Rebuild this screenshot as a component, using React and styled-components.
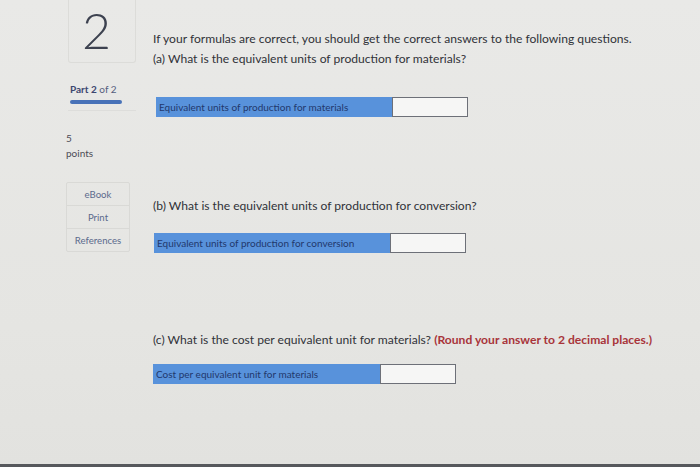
import React from "react";
import styled, { createGlobalStyle } from "styled-components";

const GlobalStyle = createGlobalStyle`
  html, body {
    margin: 0;
    padding: 0;
    background: #e6e6e3;
  }
  body {
    font-family: Lato, "Liberation Sans", Arial, sans-serif;
    color: #333;
  }
`;

const Page = styled.div`
  width: 700px;
  height: 467px;
  box-sizing: border-box;
  display: flex;
  flex-direction: column;
  background: linear-gradient(180deg, #e9e9e7 0%, #e5e5e2 70%, #e2e2df 100%);
  overflow: hidden;
`;

const Content = styled.div`
  flex: 1;
  display: grid;
  grid-template-columns: 88px 1fr;
  padding-left: 64px;
`;

const Footer = styled.div`
  height: 3px;
  background: #56585c;
`;

const Sidebar = styled.aside`
  display: flex;
  flex-direction: column;
`;

const NumberBox = styled.div`
  width: 68px;
  height: 63px;
  margin-left: 4px;
  border: 1px solid #dcdcd9;
  border-top: none;
  border-radius: 0 0 3px 3px;
  display: flex;
  justify-content: center;
  align-items: flex-start;
  box-sizing: border-box;
  font-size: 50px;
  font-weight: 300;
  color: #3d4250;
  line-height: 1.2;
  padding-right: 11px;
`;

const PartLabel = styled.div`
  margin: 20px 0 0 6px;
  font-size: 10px;
  color: #555f7e;
  span {
    font-weight: 700;
    color: #3c4770;
  }
`;

const ProgressBar = styled.div`
  margin: 5px 0 0 6px;
  width: 52px;
  height: 4px;
  border-radius: 2px;
  background: #4872b8;
`;

const Divider = styled.div`
  margin: 6px 0 0 4px;
  width: 68px;
  height: 1px;
  background: #dddddb;
`;

const Points = styled.div`
  margin: 20px 0 0 2px;
  font-size: 10px;
  line-height: 15px;
  color: #4c4c55;
`;

const ToolList = styled.div`
  margin: 21px 0 0 2px;
  width: 62px;
  border: 1px solid #d9d9d6;
  border-radius: 2px;
  display: flex;
  flex-direction: column;
`;

const ToolItem = styled.div`
  height: 22px;
  display: flex;
  align-items: center;
  justify-content: center;
  font-size: 9.6px;
  color: #5c6a8c;
  border-top: ${(p) => (p.$first ? "none" : "1px solid #d9d9d6")};
`;

const Main = styled.main`
  display: flex;
  flex-direction: column;
  padding-left: 1px;
`;

const Intro = styled.p`
  margin: 31px 0 0;
  font-size: 12.1px;
  color: #303238;
`;

const Question = styled.p`
  margin: ${(p) => p.$top}px 0 0;
  font-size: 12.1px;
  color: #303238;
`;

const Hint = styled.span`
  font-weight: 700;
  color: #a8343a;
`;

const AnswerRow = styled.div`
  margin: ${(p) => p.$top}px 0 0 ${(p) => p.$left}px;
  display: flex;
  height: 20px;
`;

const AnswerLabel = styled.div`
  width: ${(p) => p.$width}px;
  background: #5892db;
  display: flex;
  align-items: center;
  padding-left: 3px;
  box-sizing: border-box;
  font-size: 10px;
  color: #22386c;
`;

const AnswerInput = styled.div`
  width: ${(p) => p.$width}px;
  background: #f6f6f5;
  border: 1px solid #6d7078;
  box-sizing: border-box;
`;

const App = () => {
  return (
    <>
      <GlobalStyle />
      <Page>
        <Content>
          <Sidebar>
            <NumberBox>2</NumberBox>
            <PartLabel>
              <span>Part 2</span> of 2
            </PartLabel>
            <ProgressBar />
            <Divider />
            <Points>
              5
              <br />
              points
            </Points>
            <ToolList>
              <ToolItem $first>eBook</ToolItem>
              <ToolItem>Print</ToolItem>
              <ToolItem>References</ToolItem>
            </ToolList>
          </Sidebar>
          <Main>
            <Intro>
              If your formulas are correct, you should get the correct answers
              to the following questions.
            </Intro>
            <Question $top={5}>
              (a) What is the equivalent units of production for materials?
            </Question>
            <AnswerRow $top={31} $left={3}>
              <AnswerLabel $width={236}>
                Equivalent units of production for materials
              </AnswerLabel>
              <AnswerInput $width={76} />
            </AnswerRow>
            <Question $top={81}>
              (b) What is the equivalent units of production for conversion?
            </Question>
            <AnswerRow $top={20} $left={1}>
              <AnswerLabel $width={236}>
                Equivalent units of production for conversion
              </AnswerLabel>
              <AnswerInput $width={76} />
            </AnswerRow>
            <Question $top={79}>
              (c) What is the cost per equivalent unit for materials?{" "}
              <Hint>(Round your answer to 2 decimal places.)</Hint>
            </Question>
            <AnswerRow $top={17} $left={0}>
              <AnswerLabel $width={227}>
                Cost per equivalent unit for materials
              </AnswerLabel>
              <AnswerInput $width={76} />
            </AnswerRow>
          </Main>
        </Content>
        <Footer />
      </Page>
    </>
  );
};

export default App;
